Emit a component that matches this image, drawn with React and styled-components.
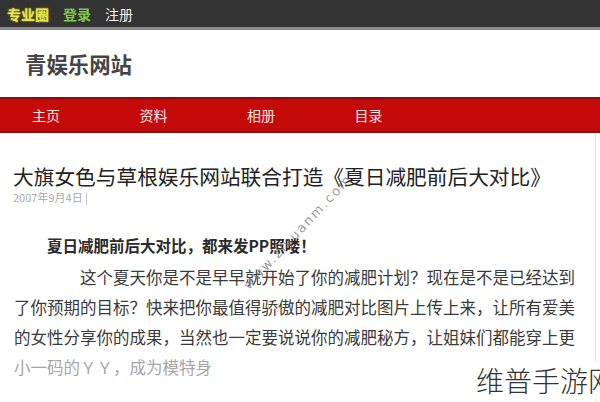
import React from "react";
import styled, { createGlobalStyle } from "styled-components";

const GlobalStyle = createGlobalStyle`
  html, body {
    margin: 0;
    padding: 0;
    background: #ffffff;
  }
  body {
    font-family: "Noto Sans CJK SC", "Noto Sans", "Liberation Sans", sans-serif;
  }
`;

const Page = styled.div`
  position: relative;
  width: 600px;
  height: 402px;
  overflow: hidden;
  background: #ffffff;
`;

const TopBar = styled.div`
  height: 27px;
  background: #333333;
  border-bottom: 3px solid #8a8a8a;
  display: flex;
  align-items: center;
  gap: 14px;
  padding-left: 7px;
`;

const TopLink = styled.span`
  font-size: 14px;
  line-height: 20px;
  font-weight: ${(p) => (p.$bold ? 700 : 400)};
  color: ${(p) => p.$color};
  text-shadow: ${(p) => (p.$glow ? `0 0 2px ${p.$glow}` : "none")};
`;

const Header = styled.div`
  height: 67px;
  display: flex;
  align-items: center;
  padding-left: 25px;
`;

const SiteName = styled.h2`
  margin: 0;
  font-size: 21.4px;
  line-height: 28px;
  font-weight: 700;
  color: #454545;
`;

const Nav = styled.nav`
  height: 32px;
  background: #c50a0a;
  border-top: 2px solid #8e0a0a;
  border-bottom: 2px solid #8e0a0a;
  display: flex;
  align-items: center;
  padding-left: 32px;
`;

const NavItem = styled.a`
  width: 107.5px;
  font-size: 14px;
  line-height: 20px;
  color: #f4e4e4;
  text-decoration: none;
`;

const Article = styled.article`
  height: 270px;
  margin-right: 4px;
  border-right: 1px solid #e2e2e2;
  padding: 30px 0 0 13px;
`;

const Title = styled.h1`
  margin: 0;
  font-size: 20.7px;
  line-height: 26px;
  font-weight: 400;
  color: #222222;
  white-space: nowrap;
`;

const Meta = styled.div`
  margin-top: 1px;
  font-size: 11px;
  line-height: 14px;
  color: #aaaaaa;
`;

const Lead = styled.p`
  margin: 31px 0 0 34px;
  font-size: 15.5px;
  line-height: 20px;
  font-weight: 700;
  color: #2a2a2a;
`;

const Body = styled.div`
  margin: 7px 0 0 1px;
  width: 561px;
  font-size: 16.5px;
  line-height: 30px;
  color: #3a3a3a;
`;

const Line = styled.div`
  text-align: justify;
  text-align-last: ${(p) => (p.$last ? "left" : "justify")};
  padding-left: ${(p) => (p.$indent ? "66px" : "0")};
  color: ${(p) => (p.$faded ? "#a6a6a6" : "inherit")};
  white-space: nowrap;
`;

const Stamp = styled.div`
  position: absolute;
  left: 470px;
  top: 361px;
  padding: 0 0 0 6px;
  background: #ffffff;
  font-size: 28px;
  line-height: 38px;
  font-weight: 300;
  color: #333333;
  white-space: nowrap;
`;

const DiagonalMark = styled.div`
  position: absolute;
  left: 222px;
  top: 224px;
  transform: rotate(-47deg);
  transform-origin: center;
  font-family: "DejaVu Sans", sans-serif;
  font-size: 13px;
  line-height: 16px;
  letter-spacing: 2px;
  color: rgba(110, 110, 110, 0.7);
  white-space: nowrap;
`;

export default function App() {
  return (
    <Page>
      <GlobalStyle />
      <TopBar>
        <TopLink $bold $color="#e9e64c" $glow="#c8c020">专业圈</TopLink>
        <TopLink $bold $color="#7fc84a">登录</TopLink>
        <TopLink $color="#f2f2f2">注册</TopLink>
      </TopBar>
      <Header>
        <SiteName>青娱乐网站</SiteName>
      </Header>
      <Nav>
        <NavItem href="#">主页</NavItem>
        <NavItem href="#">资料</NavItem>
        <NavItem href="#">相册</NavItem>
        <NavItem href="#">目录</NavItem>
      </Nav>
      <Article>
        <Title>大旗女色与草根娱乐网站联合打造《夏日减肥前后大对比》</Title>
        <Meta>2007年9月4日 |</Meta>
        <Lead>夏日减肥前后大对比，都来发PP照喽！</Lead>
        <Body>
          <Line $indent>这个夏天你是不是早早就开始了你的减肥计划？现在是不是已经达到</Line>
          <Line>了你预期的目标？快来把你最值得骄傲的减肥对比图片上传上来，让所有爱美</Line>
          <Line>的女性分享你的成果，当然也一定要说说你的减肥秘方，让姐妹们都能穿上更</Line>
          <Line $last $faded>小一码的ＹＹ，成为模特身</Line>
        </Body>
      </Article>
      <DiagonalMark>www.ziyuanm.com</DiagonalMark>
      <Stamp>维普手游网</Stamp>
    </Page>
  );
}
